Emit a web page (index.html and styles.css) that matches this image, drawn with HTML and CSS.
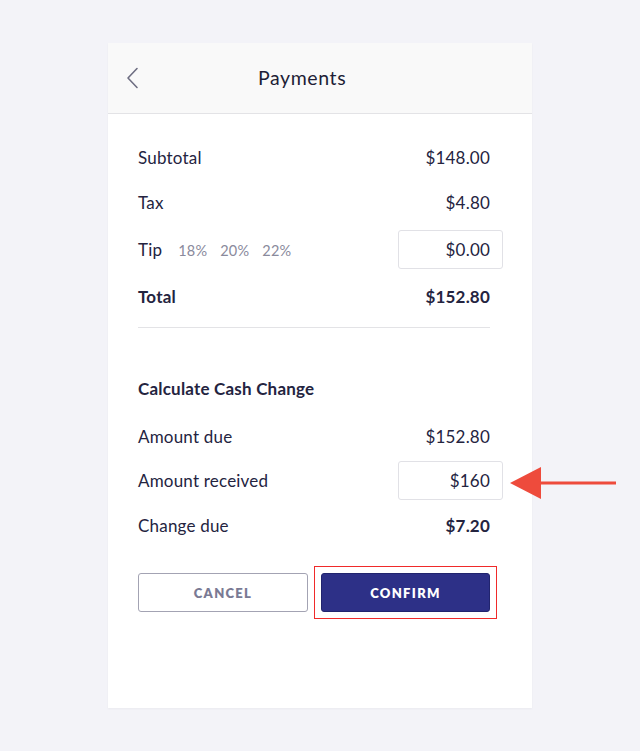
FILE: index.html
```html
<!DOCTYPE html>
<html>
<head>
<meta charset="utf-8">
<link rel="stylesheet" href="styles.css">
</head>
<body>
<div class="card">
  <div class="header">
    <svg class="back" width="14" height="22" viewBox="0 0 14 22"><path d="M11 1.5 L2 11 L11 20.5" fill="none" stroke="#6e6e82" stroke-width="1.6" stroke-linecap="round" stroke-linejoin="round"/></svg>
    <div class="title">Payments</div>
  </div>
  <div class="content">
    <div class="row r45"><span>Subtotal</span><span class="val">$148.00</span></div>
    <div class="row r45"><span>Tax</span><span class="val">$4.80</span></div>
    <div class="row r48">
      <span class="tip">Tip <span class="pct">18%</span><span class="pct">20%</span><span class="pct">22%</span></span>
      <div class="input">$0.00</div>
    </div>
    <div class="row r46 bold"><span>Total</span><span class="val">$152.80</span></div>
    <div class="divider"></div>
    <div class="heading">Calculate Cash Change</div>
    <div class="row r44"><span>Amount due</span><span class="val">$152.80</span></div>
    <div class="row r45">
      <span>Amount received</span>
      <div class="input">$160</div>
    </div>
    <div class="row r44"><span>Change due</span><span class="val bold">$7.20</span></div>
    <div class="buttons">
      <button class="btn cancel">CANCEL</button>
      <button class="btn confirm">CONFIRM</button>
    </div>
  </div>
</div>
<svg class="arrow" width="110" height="40" viewBox="0 0 110 40"><polygon points="0,20 31,4 31,36" fill="#ee4b3c"/><rect x="29" y="18.5" width="77" height="3" fill="#ee4b3c"/></svg>
</body>
</html>
```
FILE: styles.css
```css
html, body { margin: 0; padding: 0; }
body {
  background: #f3f3f8;
  font-family: Lato, "Open Sans", sans-serif;
  color: #24243f;
  padding-top: 43px;
  position: relative;
  height: 751px;
  box-sizing: border-box;
}
.card {
  margin-left: 108px;
  width: 424px;
  height: 665px;
  background: #fff;
  box-shadow: 0 1px 2px rgba(0,0,0,0.04);
}
.header {
  height: 70px;
  background: #f9f9f9;
  border-bottom: 1px solid #e3e3e6;
  display: flex;
  align-items: center;
}
.back { margin-left: 18px; }
.title {
  margin-left: 118px;
  font-size: 19.5px;
  letter-spacing: 0.6px;
  color: #1e1e36;
  margin-top: -2px;
}
.content {
  padding: 21px 29px 0 30px;
  font-size: 17px;
  letter-spacing: 0.2px;
}
.row {
  display: flex;
  justify-content: space-between;
  align-items: center;
}
.r44 { height: 44px; }
.r45 { height: 45px; }
.r46 { height: 46px; }
.r48 { height: 48px; }
.val { padding-right: 13px; }
.bold { font-weight: 700; }
.tip { display: flex; align-items: baseline; }
.pct {
  font-size: 14.5px;
  color: #8a8a9c;
  margin-left: 13px;
}
.pct:first-child { margin-left: 16px; }
.input {
  width: 105px;
  height: 39px;
  box-sizing: border-box;
  border: 1px solid #e1e1e6;
  border-radius: 3px;
  display: flex;
  align-items: center;
  justify-content: flex-end;
  padding-right: 12px;
}
.divider {
  height: 1px;
  background: #e3e3e6;
  margin: 8px 13px 0 0;
}
.heading {
  margin-top: 38px;
  height: 44px;
  margin-bottom: 4px;
  display: flex;
  align-items: center;
  font-weight: 700;
}
.buttons {
  margin-top: 26px;
  display: flex;
  gap: 13px;
  width: 352px;
}
.btn {
  height: 39px;
  box-sizing: border-box;
  border-radius: 3px;
  font-family: Lato, sans-serif;
  font-size: 13px;
  font-weight: 800;
  letter-spacing: 1.3px;
  cursor: pointer;
}
.cancel {
  width: 170px;
  background: #fff;
  border: 1px solid #a3a3b3;
  color: #7a7a94;
}
.confirm {
  width: 169px;
  background: #2d3087;
  border: 1px solid #21246e;
  color: #fff;
  position: relative;
}
.confirm::after {
  content: "";
  position: absolute;
  left: -8px; right: -8px; top: -8px; bottom: -8px;
  border: 1.5px solid #f02a2a;
}
.arrow {
  position: absolute;
  left: 510px;
  top: 463px;
}
```
